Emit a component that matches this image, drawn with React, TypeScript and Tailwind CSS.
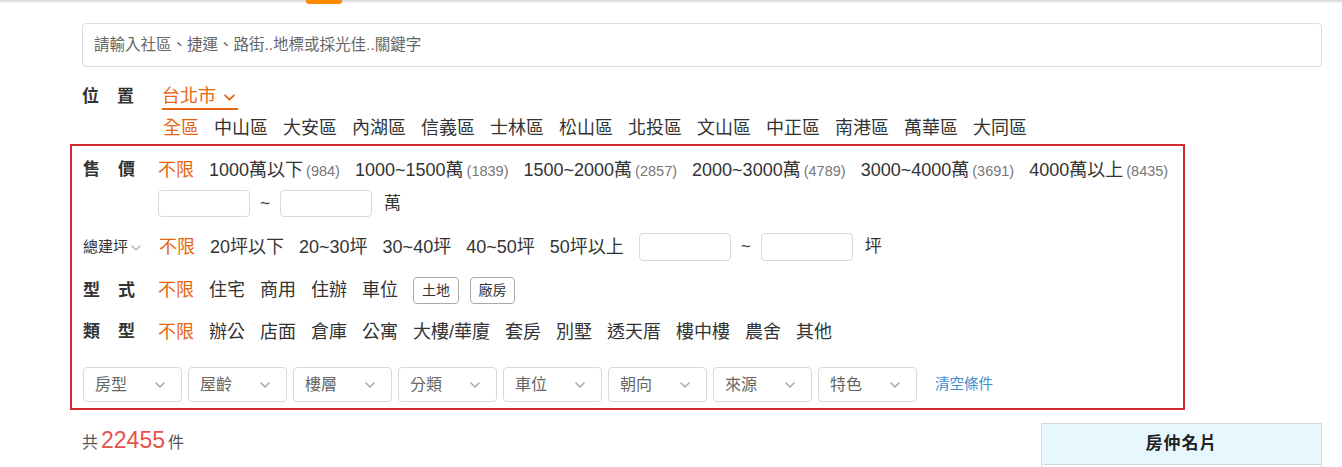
import React from "react"

const FONT = {
  fontFamily:
    '"Liberation Sans", "Noto Sans CJK TC", "Noto Sans", sans-serif',
}

const districts = [
  "全區",
  "中山區",
  "大安區",
  "內湖區",
  "信義區",
  "士林區",
  "松山區",
  "北投區",
  "文山區",
  "中正區",
  "南港區",
  "萬華區",
  "大同區",
]

const prices = [
  ["1000萬以下", "984"],
  ["1000~1500萬", "1839"],
  ["1500~2000萬", "2857"],
  ["2000~3000萬", "4789"],
  ["3000~4000萬", "3691"],
  ["4000萬以上", "8435"],
]

const areas = ["20坪以下", "20~30坪", "30~40坪", "40~50坪", "50坪以上"]
const kinds = ["住宅", "商用", "住辦", "車位"]
const types = [
  "辦公",
  "店面",
  "倉庫",
  "公寓",
  "大樓/華廈",
  "套房",
  "別墅",
  "透天厝",
  "樓中樓",
  "農舍",
  "其他",
]
const selects = ["房型", "屋齡", "樓層", "分類", "車位", "朝向", "來源", "特色"]

function Chevron({ className }: { className?: string }) {
  return (
    <svg viewBox="0 0 10 6" className={className} fill="none">
      <polyline
        points="1,1 5,5 9,1"
        stroke="currentColor"
        strokeWidth="1.6"
        strokeLinecap="round"
        strokeLinejoin="round"
      />
    </svg>
  )
}

function Label({ a, b }: { a: string; b: string }) {
  return (
    <div className="flex w-[52px] shrink-0 justify-between text-[17px] font-bold text-[#333]">
      <span>{a}</span>
      <span>{b}</span>
    </div>
  )
}

function RangeInputs({ unit, h }: { unit: string; h: string }) {
  return (
    <div className="flex shrink-0 items-center">
      <div className={`${h} w-[92px] rounded-[4px] border border-[#d9d9d9] bg-white`} />
      <span className="mx-[10px] text-[17px] text-[#333]">~</span>
      <div className={`${h} w-[92px] rounded-[4px] border border-[#d9d9d9] bg-white`} />
      <span className="ml-[12px] text-[17px] text-[#333]">{unit}</span>
    </div>
  )
}

export default function App() {
  return (
    <div className="relative h-[467px] w-[1342px] overflow-hidden bg-white" style={FONT}>
      {/* top shadow + active tab marker */}
      <div className="h-[3px] w-full bg-gradient-to-b from-[#d6d6d6] to-[#f6f6f6]">
        <div className="ml-[306px] h-[4px] w-[36px] rounded-b-[3px] bg-[#ff8a00]" />
      </div>

      <div className="ml-[82px] w-[1240px]">
        {/* search */}
        <div className="mt-[20px] flex h-[44px] items-center rounded-[4px] border border-[#dcdcdc] px-[11px] text-[15.5px] text-[#666]">
          請輸入社區、捷運、路街..地標或採光佳..關鍵字
        </div>

        {/* location */}
        <div className="mt-[17px] flex items-center">
          <div className="w-[80px] shrink-0">
            <Label a="位" b="置" />
          </div>
          <div className="flex items-center border-b-2 border-[#e8650f] pr-[3px] text-[18px] leading-[24px] text-[#e8650f]">
            台北市
            <Chevron className="ml-[8px] mt-[2px] h-[7px] w-[11px]" />
          </div>
        </div>
        <div className="mt-[6px] flex pl-[81px] text-[18px] leading-[24px] text-[#333]">
          {districts.map((d, i) => (
            <span key={d} className={i === 0 ? "mr-[15px] text-[#e8650f]" : "mr-[15px]"}>
              {d}
            </span>
          ))}
        </div>

        {/* filter box */}
        <div className="-ml-[12px] mt-[4px] w-[1115px] border-2 border-[#d42a30] pb-[6px] pl-[11px] pt-[12px]">
          {/* price */}
          <div className="flex h-[24px] items-center whitespace-nowrap">
            <div className="w-[75px] shrink-0">
              <Label a="售" b="價" />
            </div>
            <span className="mr-[15px] shrink-0 text-[18px] text-[#e8650f]">不限</span>
            {prices.map(([t, n]) => (
              <span key={t} className="mr-[15px] flex shrink-0 items-baseline">
                <span className="text-[18px] text-[#333]">{t}</span>
                <span className="ml-[3px] text-[14.5px] text-[#777]">({n})</span>
              </span>
            ))}
          </div>
          <div className="mt-[8px] pl-[75px]">
            <RangeInputs unit="萬" h="h-[27px]" />
          </div>

          {/* area */}
          <div className="mt-[16px] flex h-[28px] items-center whitespace-nowrap">
            <div className="flex w-[76px] shrink-0 items-center text-[15px] text-[#333]">
              總建坪
              <Chevron className="ml-[3px] mt-[1px] h-[6px] w-[10px] text-[#bbb]" />
            </div>
            <span className="mr-[15px] text-[18px] text-[#e8650f]">不限</span>
            {areas.map((a) => (
              <span key={a} className="mr-[15px] text-[18px] text-[#333]">
                {a}
              </span>
            ))}
            <RangeInputs unit="坪" h="h-[28px]" />
          </div>

          {/* form */}
          <div className="mt-[16px] flex h-[27px] items-center whitespace-nowrap">
            <div className="w-[75px] shrink-0">
              <Label a="型" b="式" />
            </div>
            <span className="mr-[15px] text-[18px] text-[#e8650f]">不限</span>
            {kinds.map((k) => (
              <span key={k} className="mr-[15px] text-[18px] text-[#333]">
                {k}
              </span>
            ))}
            <span className="mr-[11px] flex h-[27px] w-[46px] items-center justify-center rounded-[4px] border border-[#aaa] text-[14px] text-[#333]">
              土地
            </span>
            <span className="flex h-[27px] w-[45px] items-center justify-center rounded-[4px] border border-[#aaa] text-[14px] text-[#333]">
              廠房
            </span>
          </div>

          {/* type */}
          <div className="mt-[14px] flex h-[28px] items-center whitespace-nowrap">
            <div className="w-[75px] shrink-0">
              <Label a="類" b="型" />
            </div>
            <span className="mr-[15px] text-[18px] text-[#e8650f]">不限</span>
            {types.map((t) => (
              <span key={t} className="mr-[15px] text-[18px] text-[#333]">
                {t}
              </span>
            ))}
          </div>

          {/* selects */}
          <div className="mt-[21px] flex items-center gap-[6px]">
            {selects.map((s) => (
              <div
                key={s}
                className="flex h-[35px] w-[99px] items-center justify-between rounded-[4px] border border-[#d9d9d9] pl-[11px] pr-[16px] text-[16px] text-[#666]"
              >
                {s}
                <Chevron className="h-[6px] w-[10px] text-[#aaa]" />
              </div>
            ))}
            <span className="ml-[12px] text-[14.5px] text-[#3a8ccf]">清空條件</span>
          </div>
        </div>

        {/* bottom */}
        <div className="flex items-start justify-between">
          <div className="mt-[13px] flex items-baseline text-[#555]">
            <span className="text-[16px]">共</span>
            <span className="mx-[3px] text-[23px] text-[#e5534b]">22455</span>
            <span className="text-[16px]">件</span>
          </div>
          <div className="mt-[13px] w-[281px] border border-[#d6d9dc] bg-[#e6f7fd]">
            <div className="flex h-[40px] items-center justify-center text-[17px] font-bold tracking-[1px] text-[#222]">
              房仲名片
            </div>
            <div className="h-[10px] border-t border-[#d6d9dc] bg-white" />
          </div>
        </div>
      </div>
    </div>
  )
}
